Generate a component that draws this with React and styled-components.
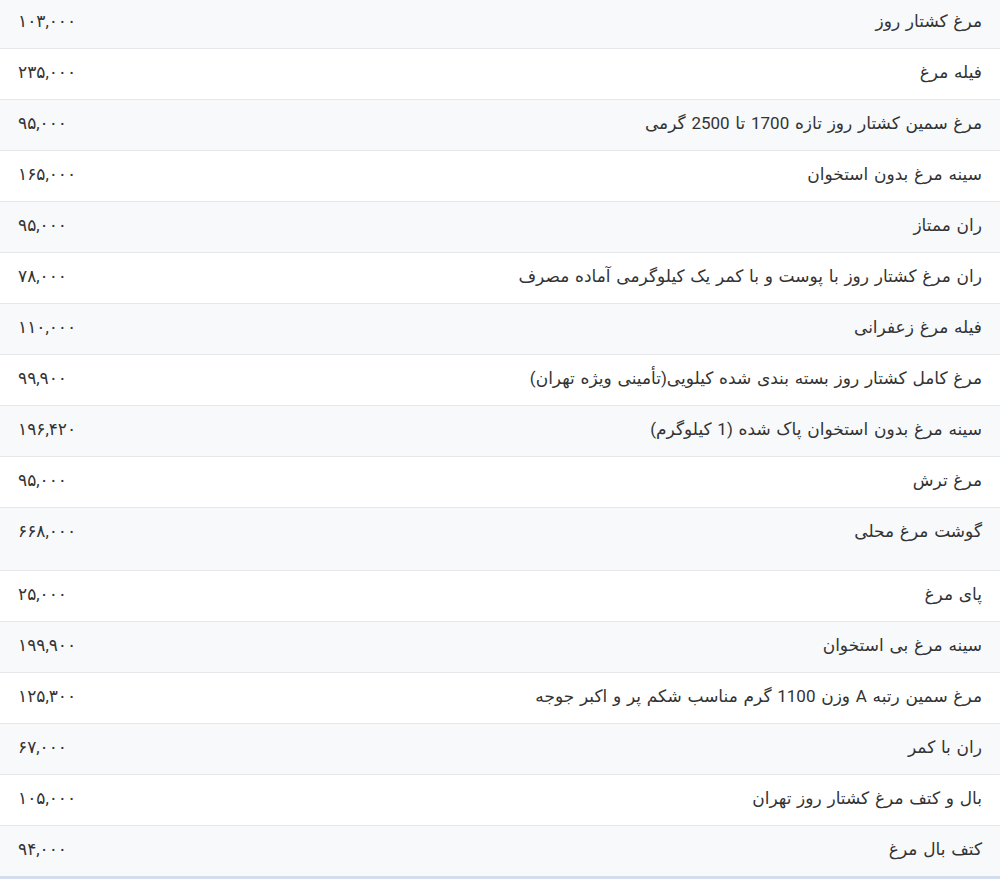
import React from "react";
import styled, { createGlobalStyle } from "styled-components";

const GlobalStyle = createGlobalStyle`
  html, body {
    margin: 0;
    padding: 0;
    background: #ffffff;
  }
  body {
    font-family: Roboto, "DejaVu Sans", "Noto Sans Arabic", sans-serif;
    color: #333333;
  }
`;

const rows = [
  { name: "مرغ کشتار روز", price: "۱۰۳,۰۰۰" },
  { name: "فیله مرغ", price: "۲۳۵,۰۰۰" },
  { name: "مرغ سمین کشتار روز تازه 1700 تا 2500 گرمی", price: "۹۵,۰۰۰" },
  { name: "سینه مرغ بدون استخوان", price: "۱۶۵,۰۰۰" },
  { name: "ران ممتاز", price: "۹۵,۰۰۰" },
  { name: "ران مرغ کشتار روز با پوست و با کمر یک کیلوگرمی آماده مصرف", price: "۷۸,۰۰۰" },
  { name: "فیله مرغ زعفرانی", price: "۱۱۰,۰۰۰" },
  { name: "مرغ کامل کشتار روز بسته بندی شده کیلویی(تأمینی ویژه تهران)", price: "۹۹,۹۰۰" },
  { name: "سینه مرغ بدون استخوان پاک شده (1 کیلوگرم)", price: "۱۹۶,۴۲۰" },
  { name: "مرغ ترش", price: "۹۵,۰۰۰" },
  { name: "گوشت مرغ محلی", price: "۶۶۸,۰۰۰", tall: true },
  { name: "پای مرغ", price: "۲۵,۰۰۰" },
  { name: "سینه مرغ بی استخوان", price: "۱۹۹,۹۰۰" },
  { name: "مرغ سمین رتبه A وزن 1100 گرم مناسب شکم پر و اکبر جوجه", price: "۱۲۵,۳۰۰" },
  { name: "ران با کمر", price: "۶۷,۰۰۰" },
  { name: "بال و کتف مرغ کشتار روز تهران", price: "۱۰۵,۰۰۰" },
  { name: "کتف بال مرغ", price: "۹۴,۰۰۰" },
];

function App() {
  return (
    <>
      <GlobalStyle />
      <TableWrap>
        <PriceTable dir="rtl">
          <tbody>
            {rows.map((row, i) => (
              <Row key={i} $striped={i % 2 === 0}>
                <NameCell $tall={row.tall}>{row.name}</NameCell>
                <PriceCell $tall={row.tall}>{row.price}</PriceCell>
              </Row>
            ))}
          </tbody>
        </PriceTable>
      </TableWrap>
    </>
  );
}

const TableWrap = styled.div`
  // the page is scrolled a little, so the first row is cut at the top
  margin-top: -2px;
  border-bottom: 3px solid #d3ddee;
`;

const PriceTable = styled.table`
  width: 100%;
  border-collapse: collapse;
  font-size: 17px;
  word-spacing: 1.5px;
`;

const Row = styled.tr`
  background-color: ${(p) => (p.$striped ? "#f8f9fb" : "#ffffff")};
  border-bottom: 1px solid #e6e8ec;
  &:last-child {
    border-bottom: none;
  }
`;

const Cell = styled.td`
  vertical-align: top;
  line-height: 26px;
  padding: 10px 18px ${(p) => (p.$tall ? "26px" : "14px")};
  white-space: nowrap;
`;

const NameCell = styled(Cell)`
  text-align: right;
  color: #333333;
`;

const PriceCell = styled(Cell)`
  text-align: left;
  color: #333333;
  width: 1%;
  word-spacing: 0;
`;

export default App;
